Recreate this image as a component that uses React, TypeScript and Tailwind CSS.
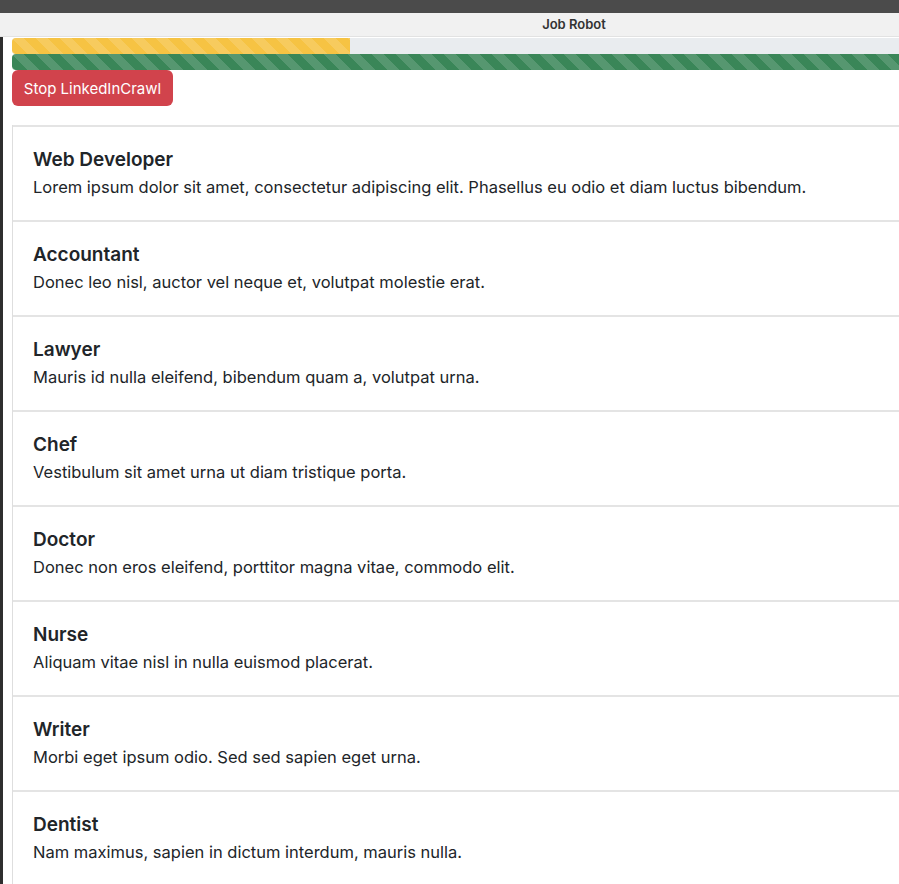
import React from "react";

const jobs = [
  ["Web Developer", "Lorem ipsum dolor sit amet, consectetur adipiscing elit. Phasellus eu odio et diam luctus bibendum."],
  ["Accountant", "Donec leo nisl, auctor vel neque et, volutpat molestie erat."],
  ["Lawyer", "Mauris id nulla eleifend, bibendum quam a, volutpat urna."],
  ["Chef", "Vestibulum sit amet urna ut diam tristique porta."],
  ["Doctor", "Donec non eros eleifend, porttitor magna vitae, commodo elit."],
  ["Nurse", "Aliquam vitae nisl in nulla euismod placerat."],
  ["Writer", "Morbi eget ipsum odio. Sed sed sapien eget urna."],
  ["Dentist", "Nam maximus, sapien in dictum interdum, mauris nulla."],
];

const stripes =
  "bg-[linear-gradient(45deg,rgba(255,255,255,.14)_25%,transparent_25%,transparent_50%,rgba(255,255,255,.14)_50%,rgba(255,255,255,.14)_75%,transparent_75%,transparent)] bg-[length:24px_24px]";

export default function App() {
  return (
    <div className="w-[899px] h-[884px] overflow-hidden bg-white text-[#212529] font-['Inter','Noto_Sans',sans-serif]">
      <div className="w-[1148px]">
        <div className="h-[13px] bg-[#4b4b4b]" />
        <div className="h-[24px] bg-[#f1f1f1] border-b border-[#e2e2e2] flex items-center justify-center text-[13px] font-semibold text-[#333]">
          Job Robot
        </div>
        <div className="flex">
          <div className="w-[3px] bg-[#2e2e2e] self-stretch" />
          <div className="flex-1 pl-[9px] pr-[12px] pt-[1px]">
            <div className="h-[16px] rounded-[4px] bg-[#e9ecef] overflow-hidden flex">
              <div className={`w-[338px] h-full bg-[#f6c343] ${stripes}`} />
            </div>
            <div className={`h-[16px] rounded-[4px] bg-[#3a8658] ${stripes}`} />
            <button className="mt-0 h-[36px] w-[161px] rounded-[6px] bg-[#d1434c] text-white text-[15px] leading-none flex items-center justify-center">
              Stop LinkedInCrawl
            </button>
            <div className="mt-[19px] border-l border-[#dedede]">
              {jobs.map(([t, d]) => (
                <div key={t} className="h-[95px] border-t-2 border-[#e4e4e4] px-[20px] flex flex-col justify-center">
                  <div className="text-[19px] leading-[26px] font-semibold">{t}</div>
                  <div className="text-[16.5px] leading-[28px]">{d}</div>
                </div>
              ))}
            </div>
          </div>
        </div>
      </div>
    </div>
  );
}
